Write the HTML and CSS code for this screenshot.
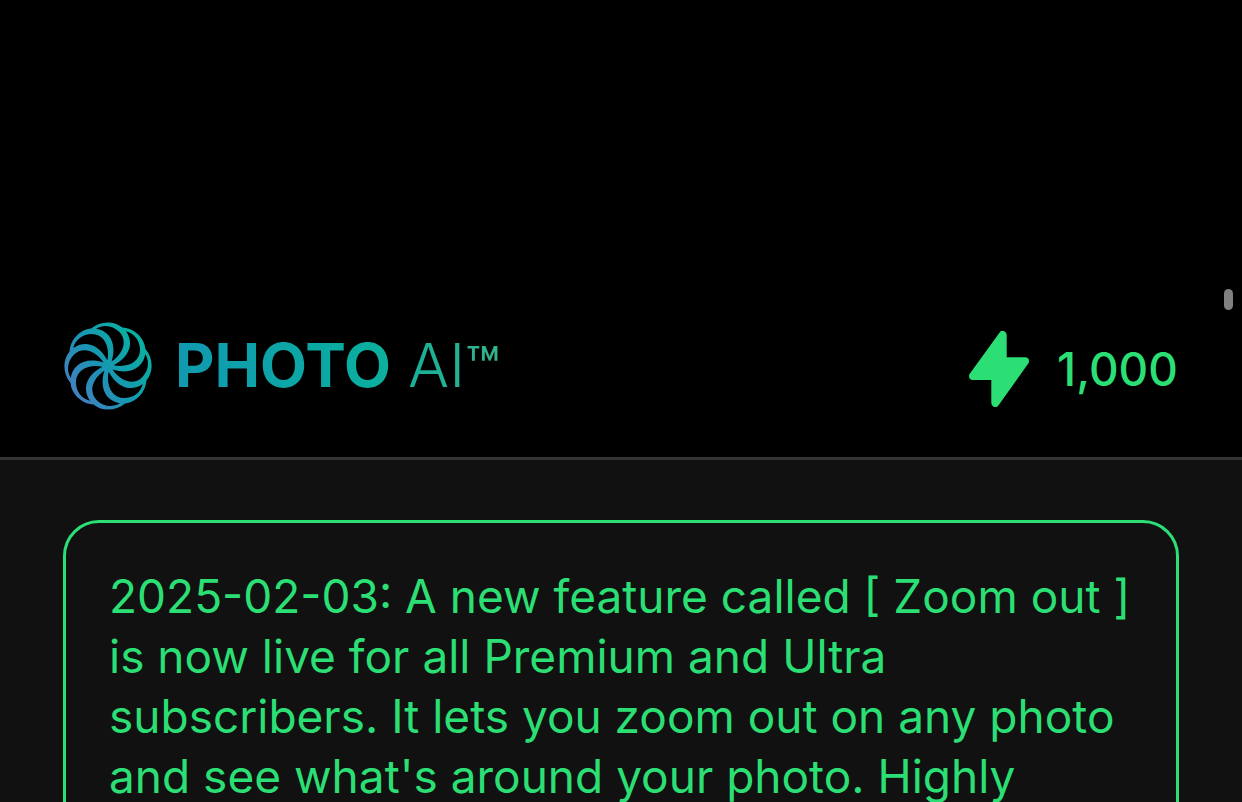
FILE: index.html
```
<!DOCTYPE html>
<html lang="en">
<head>
    <meta charset="UTF-8">
    <meta name="viewport" content="width=device-width, initial-scale=1.0">
    <title>Photo AI</title>
    <link rel="stylesheet" href="styles.css">
</head>
<body>
<header class="header">
    <a class="brand" href="#">
        <svg class="brand-logo" viewBox="-131 -131 262 262" aria-hidden="true">
            <defs>
                <linearGradient id="logo-gradient" gradientUnits="userSpaceOnUse" x1="-110" y1="80" x2="90" y2="-60">
                    <stop offset="0" stop-color="#447fc1"/>
                    <stop offset="0.5" stop-color="#1896b2"/>
                    <stop offset="1" stop-color="#0aaea3"/>
                </linearGradient>
                <path id="blade" d="M-52-110C-24-136 22-137 48-110C76-80 77-28 5 4L-5-4C46-30 60-74 34-101C10-125-24-125-48-101Z"/>
                <clipPath id="blades">
                    <use href="#blade"/>
                    <use href="#blade" transform="rotate(45)"/>
                    <use href="#blade" transform="rotate(90)"/>
                    <use href="#blade" transform="rotate(135)"/>
                    <use href="#blade" transform="rotate(180)"/>
                    <use href="#blade" transform="rotate(225)"/>
                    <use href="#blade" transform="rotate(270)"/>
                    <use href="#blade" transform="rotate(315)"/>
                </clipPath>
            </defs>
            <rect x="-131" y="-131" width="262" height="262" fill="url(#logo-gradient)" clip-path="url(#blades)"/>
        </svg>
        <span class="brand-name"><b>PHOTO</b> AI<span class="brand-mark">™</span></span>
    </a>
    <a class="credits" href="#">
        <svg class="credits-icon" viewBox="0 0 60 76" aria-hidden="true">
            <path d="M33.7 4V30.3H56L26.3 72V45H4Z"/>
        </svg>
        <span>1,000</span>
    </a>
</header>
<main class="content">
    <p class="notice">2025-02-03: A new feature called [ Zoom out ] is now live for all Premium and Ultra subscribers. It lets you zoom out on any photo and see what's around your photo. Highly</p>
</main>
<div class="scroll-thumb"></div>
</body>
</html>
```
FILE: styles.css
```
* {
    box-sizing: border-box;
}

body {
    font-family: Inter, 'Liberation Sans', sans-serif;
    background-color: #111111;
    color: #2cdf74;
    margin: 0;
    height: 100vh;
    overflow: hidden;
}

.header {
    display: flex;
    align-items: center;
    justify-content: space-between;
    background-color: #000000;
    border-bottom: 3px solid #333333;
    padding: 322px 64px 47px;
}

.brand,
.credits {
    display: flex;
    align-items: center;
    color: inherit;
    text-decoration: none;
}

.brand {
    gap: 23px;
}

.brand-logo {
    width: 88px;
    height: 88px;
}

.brand-name {
    font-size: 61px;
    font-weight: 300;
    line-height: 84px;
    padding-bottom: 2px;
    background: linear-gradient(90deg, #1199b0, #0aae9f 60%, #33b48c);
    background-clip: text;
    -webkit-background-clip: text;
    color: transparent;
}

.brand-name b {
    font-weight: 700;
}

.brand-mark {
    font-size: 56px;
    font-weight: 500;
    line-height: 1;
}

.credits {
    gap: 28px;
    font-size: 46px;
    font-weight: 500;
    line-height: 60px;
    padding-top: 6px;
}

.credits-icon {
    width: 60px;
    height: 76px;
    fill: #2cdf74;
    stroke: #2cdf74;
    stroke-width: 8;
    stroke-linejoin: round;
}

.content {
    padding: 60px 63px;
}

.notice {
    margin: 0;
    padding: 43px;
    border: 3px solid #2cdf74;
    border-radius: 36px;
    font-size: 46px;
    line-height: 60px;
}

/* overlay scrollbar */
.scroll-thumb {
    position: absolute;
    top: 289px;
    right: 9px;
    width: 9px;
    height: 21px;
    border-radius: 5px;
    background-color: #808080;
}
```
